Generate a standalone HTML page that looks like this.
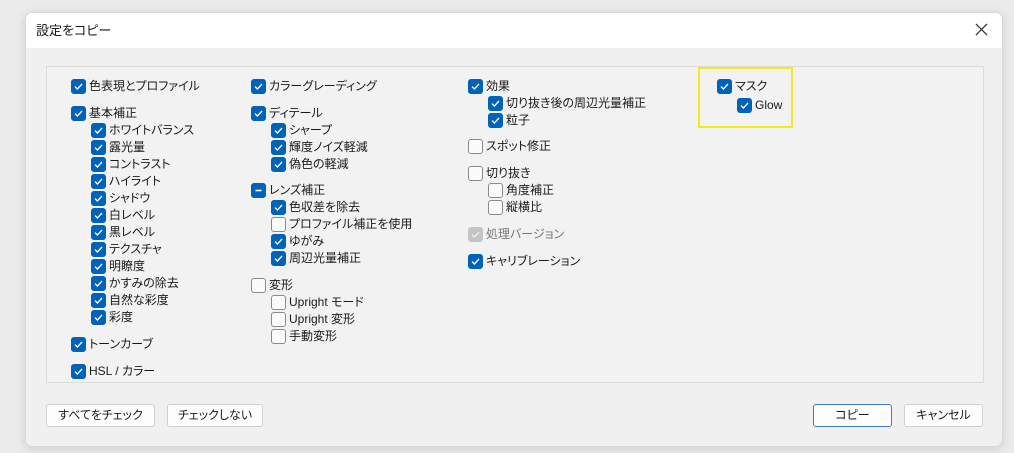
<!DOCTYPE html>
<html><head><meta charset="utf-8"><style>
body{margin:0;width:1014px;height:453px;background:#ebebeb;position:relative;overflow:hidden;font-family:"Liberation Sans","Noto Sans CJK JP",sans-serif;font-size:12px;color:#1a1a1a;font-feature-settings:"palt" 1}
.dlg{position:absolute;left:25px;top:12px;width:976px;height:433px;background:#f0f0f0;border:1px solid #d8d8d8;border-radius:7px;box-shadow:0 2px 10px rgba(0,0,0,.12);overflow:hidden}
.tb{position:absolute;left:0;top:0;width:976px;height:35px;background:#fff}
.ttl{position:absolute;left:10px;top:7px;font-size:13px}
.x{position:absolute;left:949px;top:10px;width:13px;height:13px}
.panel{position:absolute;left:46px;top:66px;width:936px;height:315px;border:1px solid #dcdcdc;background:#f2f2f2}
.c{position:absolute;height:17px;line-height:17px;white-space:nowrap}
.b{position:absolute;left:0;top:1px;width:13px;height:13px;border-radius:3px;background:#0062b8;border:1px solid #0062b8}
.b.u{background:#fbfbfb;border-color:#8a8a8a}
.b.g{background:#c4c4c4;border-color:#c4c4c4}
.b svg{position:absolute;left:2px;top:2px}
.t{position:absolute;left:18px;top:0}
.btn{position:absolute;height:21px;line-height:21px;text-align:center;background:#fdfdfd;border:1px solid #d0d0d0;border-radius:3px;font-size:12px}
.hl{position:absolute;left:698px;top:67px;width:91px;height:57px;border:2px solid #f2ea1d}
</style></head><body>
<div class="dlg">
<div class="tb"><div class="ttl">設定をコピー</div>
<svg class="x" viewBox="0 0 14 14"><path d="M1 1L13 13M13 1L1 13" stroke="#333" stroke-width="1.3"/></svg></div>
</div>
<div class="panel"></div>
<div class="hl"></div>
<div id="items"></div>
<div class="btn" style="left:46px;top:404px;width:107px">すべてをチェック</div>
<div class="btn" style="left:167px;top:404px;width:94px">チェックしない</div>
<div class="btn" style="left:813px;top:404px;width:77px;border-color:#3b7fc4">コピー</div>
<div class="btn" style="left:904px;top:404px;width:77px">キャンセル</div>
<script>
var chk='<svg width="9" height="9" viewBox="0 0 9 9"><path d="M1 4.6L3.4 7L8 2" stroke="#fff" stroke-width="1.3" fill="none"/></svg>';
var dash='<svg width="9" height="9" viewBox="0 0 9 9"><path d="M1.5 4.5H7.5" stroke="#fff" stroke-width="1.6"/></svg>';
var gchk='<svg width="9" height="9" viewBox="0 0 9 9"><path d="M1 4.6L3.4 7L8 2" stroke="#eee" stroke-width="1.3" fill="none"/></svg>';
var I=[
[71,86,'色表現とプロファイル','c'],[71,113,'基本補正','c'],[91,130,'ホワイトバランス','c'],[91,147,'露光量','c'],[91,164,'コントラスト','c'],[91,181,'ハイライト','c'],[91,198,'シャドウ','c'],[91,215,'白レベル','c'],[91,232,'黒レベル','c'],[91,249,'テクスチャ','c'],[91,266,'明瞭度','c'],[91,283,'かすみの除去','c'],[91,300,'自然な彩度','c'],[91,317,'彩度','c'],[71,344,'トーンカーブ','c'],[71,371,'HSL / カラー','c'],
[251,86,'カラーグレーディング','c'],[251,113,'ディテール','c'],[271,130,'シャープ','c'],[271,147,'輝度ノイズ軽減','c'],[271,164,'偽色の軽減','c'],[251,190,'レンズ補正','d'],[271,207,'色収差を除去','c'],[271,224,'プロファイル補正を使用','u'],[271,241,'ゆがみ','c'],[271,258,'周辺光量補正','c'],[251,285,'変形','u'],[271,302,'Upright モード','u'],[271,319,'Upright 変形','u'],[271,336,'手動変形','u'],
[468,86,'効果','c'],[488,103,'切り抜き後の周辺光量補正','c'],[488,120,'粒子','c'],[468,146,'スポット修正','u'],[468,173,'切り抜き','u'],[488,190,'角度補正','u'],[488,207,'縦横比','u'],[468,234,'処理バージョン','g'],[468,261,'キャリブレーション','c'],
[717,86,'マスク','c'],[737,105,'Glow','c']];
var h='';I.forEach(function(a){var cls=a[3]=='u'?'b u':a[3]=='g'?'b g':'b';var ic=a[3]=='c'?chk:a[3]=='d'?dash:a[3]=='g'?gchk:'';
h+='<div class="c" style="left:'+a[0]+'px;top:'+(a[1]-8)+'px"><div class="'+cls+'">'+ic+'</div><div class="t"'+(a[3]=='g'?' style="color:#777"':'')+'>'+a[2]+'</div></div>';});
document.getElementById('items').innerHTML=h;
</script>
</body></html>
